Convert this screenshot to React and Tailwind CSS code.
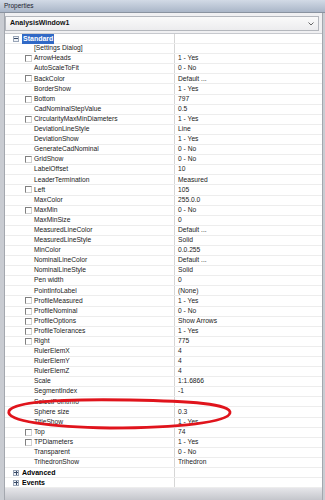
import React from "react";

const rows = [
  ["[Settings Dialog]", "", false],
  ["ArrowHeads", "1 - Yes", true],
  ["AutoScaleToFit", "0 - No", false],
  ["BackColor", "Default ...", true],
  ["BorderShow", "1 - Yes", false],
  ["Bottom", "797", true],
  ["CadNominalStepValue", "0.5", false],
  ["CircularityMaxMinDiameters", "1 - Yes", true],
  ["DeviationLineStyle", "Line", false],
  ["DeviationShow", "1 - Yes", false],
  ["GenerateCadNominal", "0 - No", false],
  ["GridShow", "0 - No", true],
  ["LabelOffset", "10", false],
  ["LeaderTermination", "Measured", false],
  ["Left", "105", true],
  ["MaxColor", "255.0.0", false],
  ["MaxMin", "0 - No", true],
  ["MaxMinSize", "0", false],
  ["MeasuredLineColor", "Default ...", false],
  ["MeasuredLineStyle", "Solid", false],
  ["MinColor", "0.0.255", false],
  ["NominalLineColor", "Default ...", false],
  ["NominalLineStyle", "Solid", false],
  ["Pen width", "0", false],
  ["PointInfoLabel", "(None)", false],
  ["ProfileMeasured", "1 - Yes", true],
  ["ProfileNominal", "0 - No", true],
  ["ProfileOptions", "Show Arrows", true],
  ["ProfileTolerances", "1 - Yes", true],
  ["Right", "775", true],
  ["RulerElemX", "4", false],
  ["RulerElemY", "4", false],
  ["RulerElemZ", "4", false],
  ["Scale", "1:1.6866", false],
  ["SegmentIndex", "-1", false],
  ["SelectPointInfo", "", false],
  ["Sphere size", "0.3", false],
  ["TitleShow", "1 - Yes", false],
  ["Top", "74", true],
  ["TPDiameters", "1 - Yes", true],
  ["Transparent", "0 - No", false],
  ["TrihedronShow", "Trihedron", false],
];

function Expander({ open }) {
  return (
    <span className="relative w-[6px] h-[6px] border border-[#9aa6b8] bg-[#eef1f6] flex items-center justify-center shrink-0">
      <span className="absolute w-[4px] h-px bg-[#3a4a66]" />
      {!open && <span className="absolute w-px h-[4px] bg-[#3a4a66]" />}
    </span>
  );
}

function Category({ name, open, selected }) {
  return (
    <div className="flex h-[10.1px] border-b border-[#ededed]">
      <div className="w-[169px] flex items-center pl-[8px] gap-[3px]">
        <Expander open={open} />
        <span
          className={
            selected
              ? "bg-[#3169c6] text-white font-bold px-[1px] leading-[10px] text-[7px]"
              : "font-bold text-black text-[7px] leading-none"
          }
        >
          {name}
        </span>
      </div>
      <div className="flex-1 border-l border-[#d6d6d6]" />
    </div>
  );
}

export default function App() {
  return (
    <div
      className="relative w-[325px] h-[500px] overflow-hidden bg-[#d9dbe0] text-[#222]"
      style={{ fontFamily: "'Liberation Sans', Arial, sans-serif" }}
    >
      <div className="h-[13px] bg-gradient-to-b from-[#d2dae6] to-[#aab6c8] border-b border-[#8a93a0] px-[4px] flex items-center text-[6.5px] text-[#1c2330]">
        Properties
      </div>
      <div className="flex h-[487px]">
        <div className="w-[5px] bg-[#c9ccd2] border-r border-[#a3a7ae]" />
        <div className="flex-1 flex flex-col bg-[#f0f0f2]">
          <div className="mt-[3px] h-[15px] flex">
            <div className="flex-1 h-full border border-[#b4b7bd] bg-gradient-to-b from-[#fafafa] to-[#ececee] flex items-center px-[4px]">
              <span className="font-bold text-[7px] text-[#111] flex-1">AnalysisWindow1</span>
              <svg width="6" height="4" viewBox="0 0 6 4">
                <path d="M0.5 0.5 L3 3 L5.5 0.5" fill="none" stroke="#666" strokeWidth="1" />
              </svg>
            </div>
            <div className="w-[3px]" />
          </div>
          <div className="mt-[2px] bg-white border-t border-[#c7c9ce] text-[6.7px] leading-none">
            <Category name="Standard" open selected />
            {rows.map(([label, value, check]) => (
              <div key={label} className="flex h-[10.1px] border-b border-[#ededed]">
                <div className="w-[169px] flex items-center pl-[20px] text-[#1a1a1a]">
                  {check ? (
                    <span className="w-[7px] h-[7px] border border-t-[#808080] border-l-[#808080] border-r-[#d0d0d0] border-b-[#d0d0d0] bg-white shrink-0 mr-[2px]" />
                  ) : (
                    <span className="w-[9px] shrink-0" />
                  )}
                  <span className="whitespace-nowrap">{label}</span>
                </div>
                <div className="flex-1 border-l border-[#d6d6d6] flex items-center pl-[3px] text-[#1a1a1a] whitespace-nowrap">
                  {value}
                </div>
              </div>
            ))}
            <Category name="Advanced" />
            <Category name="Events" />
          </div>
          <div className="flex-1 bg-gradient-to-b from-[#e6e6ea] to-[#c4c6cc]" />
        </div>
        <div className="w-[3px] bg-[#c9ccd2] border-l border-[#a3a7ae]" />
      </div>
      <svg
        className="absolute left-0 top-0 pointer-events-none"
        width="325"
        height="500"
        viewBox="0 0 325 500"
      >
        <path
          d="M9 411 C 14 401, 70 399, 130 400 C 190 401, 232 404, 230 413 C 228 422, 180 428, 110 428 C 50 427, 5 421, 9 411 Z"
          fill="none"
          stroke="#e0141c"
          strokeWidth="2.8"
        />
      </svg>
    </div>
  );
}
